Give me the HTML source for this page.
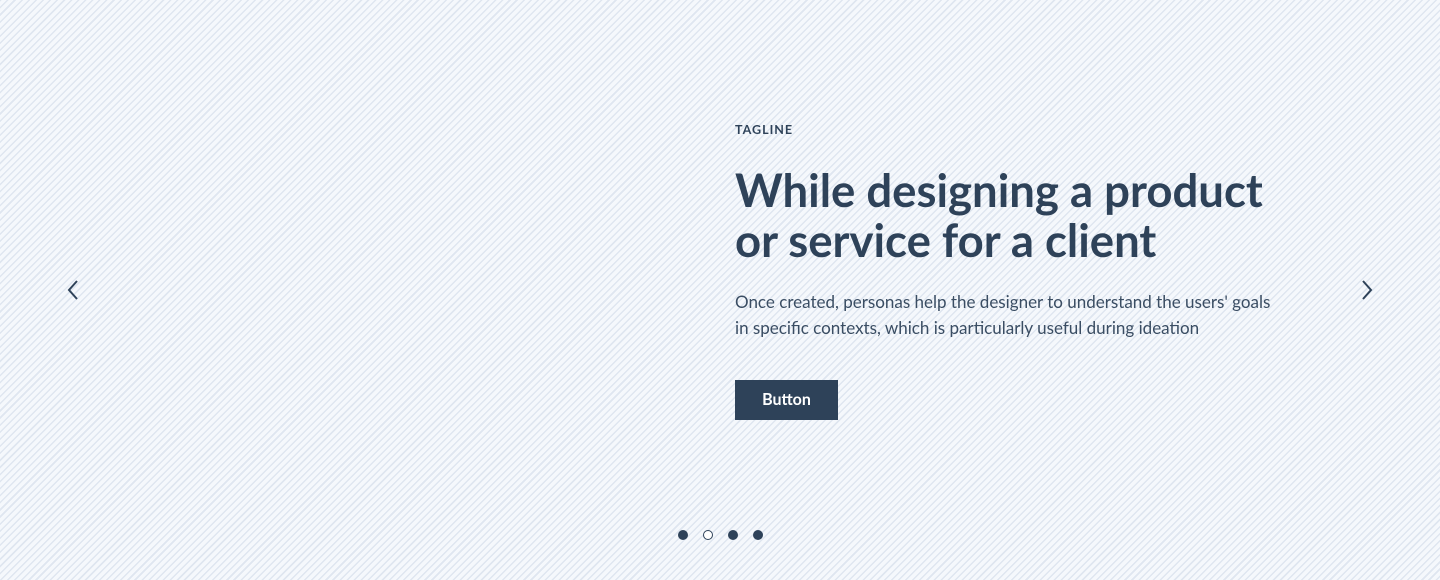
<!DOCTYPE html>
<html><head><style>
html,body{margin:0;padding:0}
body{width:1440px;height:580px;position:relative;overflow:hidden;font-family:"Lato","Liberation Sans",sans-serif;color:#2e4259;
background:#f4f7fb repeating-linear-gradient(-45deg,#f5f8fc 0 2px,#dfe6f0 2px 3.5px,#f5f8fc 3.5px 5px);}
.tag{position:absolute;left:735px;top:122px;font-size:12.5px;font-weight:700;letter-spacing:1px}
h1{position:absolute;left:735px;top:165px;margin:0;font-size:45.5px;line-height:50px;font-weight:700;width:560px}
p{position:absolute;left:735px;top:289px;margin:0;font-size:17px;line-height:26px;color:#3a4d63;width:550px}
.btn{position:absolute;left:735px;top:380px;width:103px;height:40px;background:#2e4259;color:#fff;font-weight:700;font-size:16px;text-align:center;line-height:40px}
.dot{position:absolute;top:530px;width:10px;height:10px;border-radius:50%;background:#2e4259;box-sizing:border-box}
svg{position:absolute}
</style></head><body>
<div class="tag">TAGLINE</div>
<h1>While designing a product or service for a client</h1>
<p>Once created, personas help the designer to understand the users' goals in specific contexts, which is particularly useful during ideation</p>
<div class="btn">Button</div>
<svg style="left:64px;top:279px" width="18" height="22"><path d="M13 2L5 11L13 20" fill="none" stroke="#2e4259" stroke-width="2"/></svg>
<svg style="left:1358px;top:279px" width="18" height="22"><path d="M5 2L13 11L5 20" fill="none" stroke="#2e4259" stroke-width="2"/></svg>
<div class="dot" style="left:678px"></div>
<div class="dot" style="left:703px;background:#fff;border:1.5px solid #2e4259"></div>
<div class="dot" style="left:728px"></div>
<div class="dot" style="left:753px"></div>
</body></html>
